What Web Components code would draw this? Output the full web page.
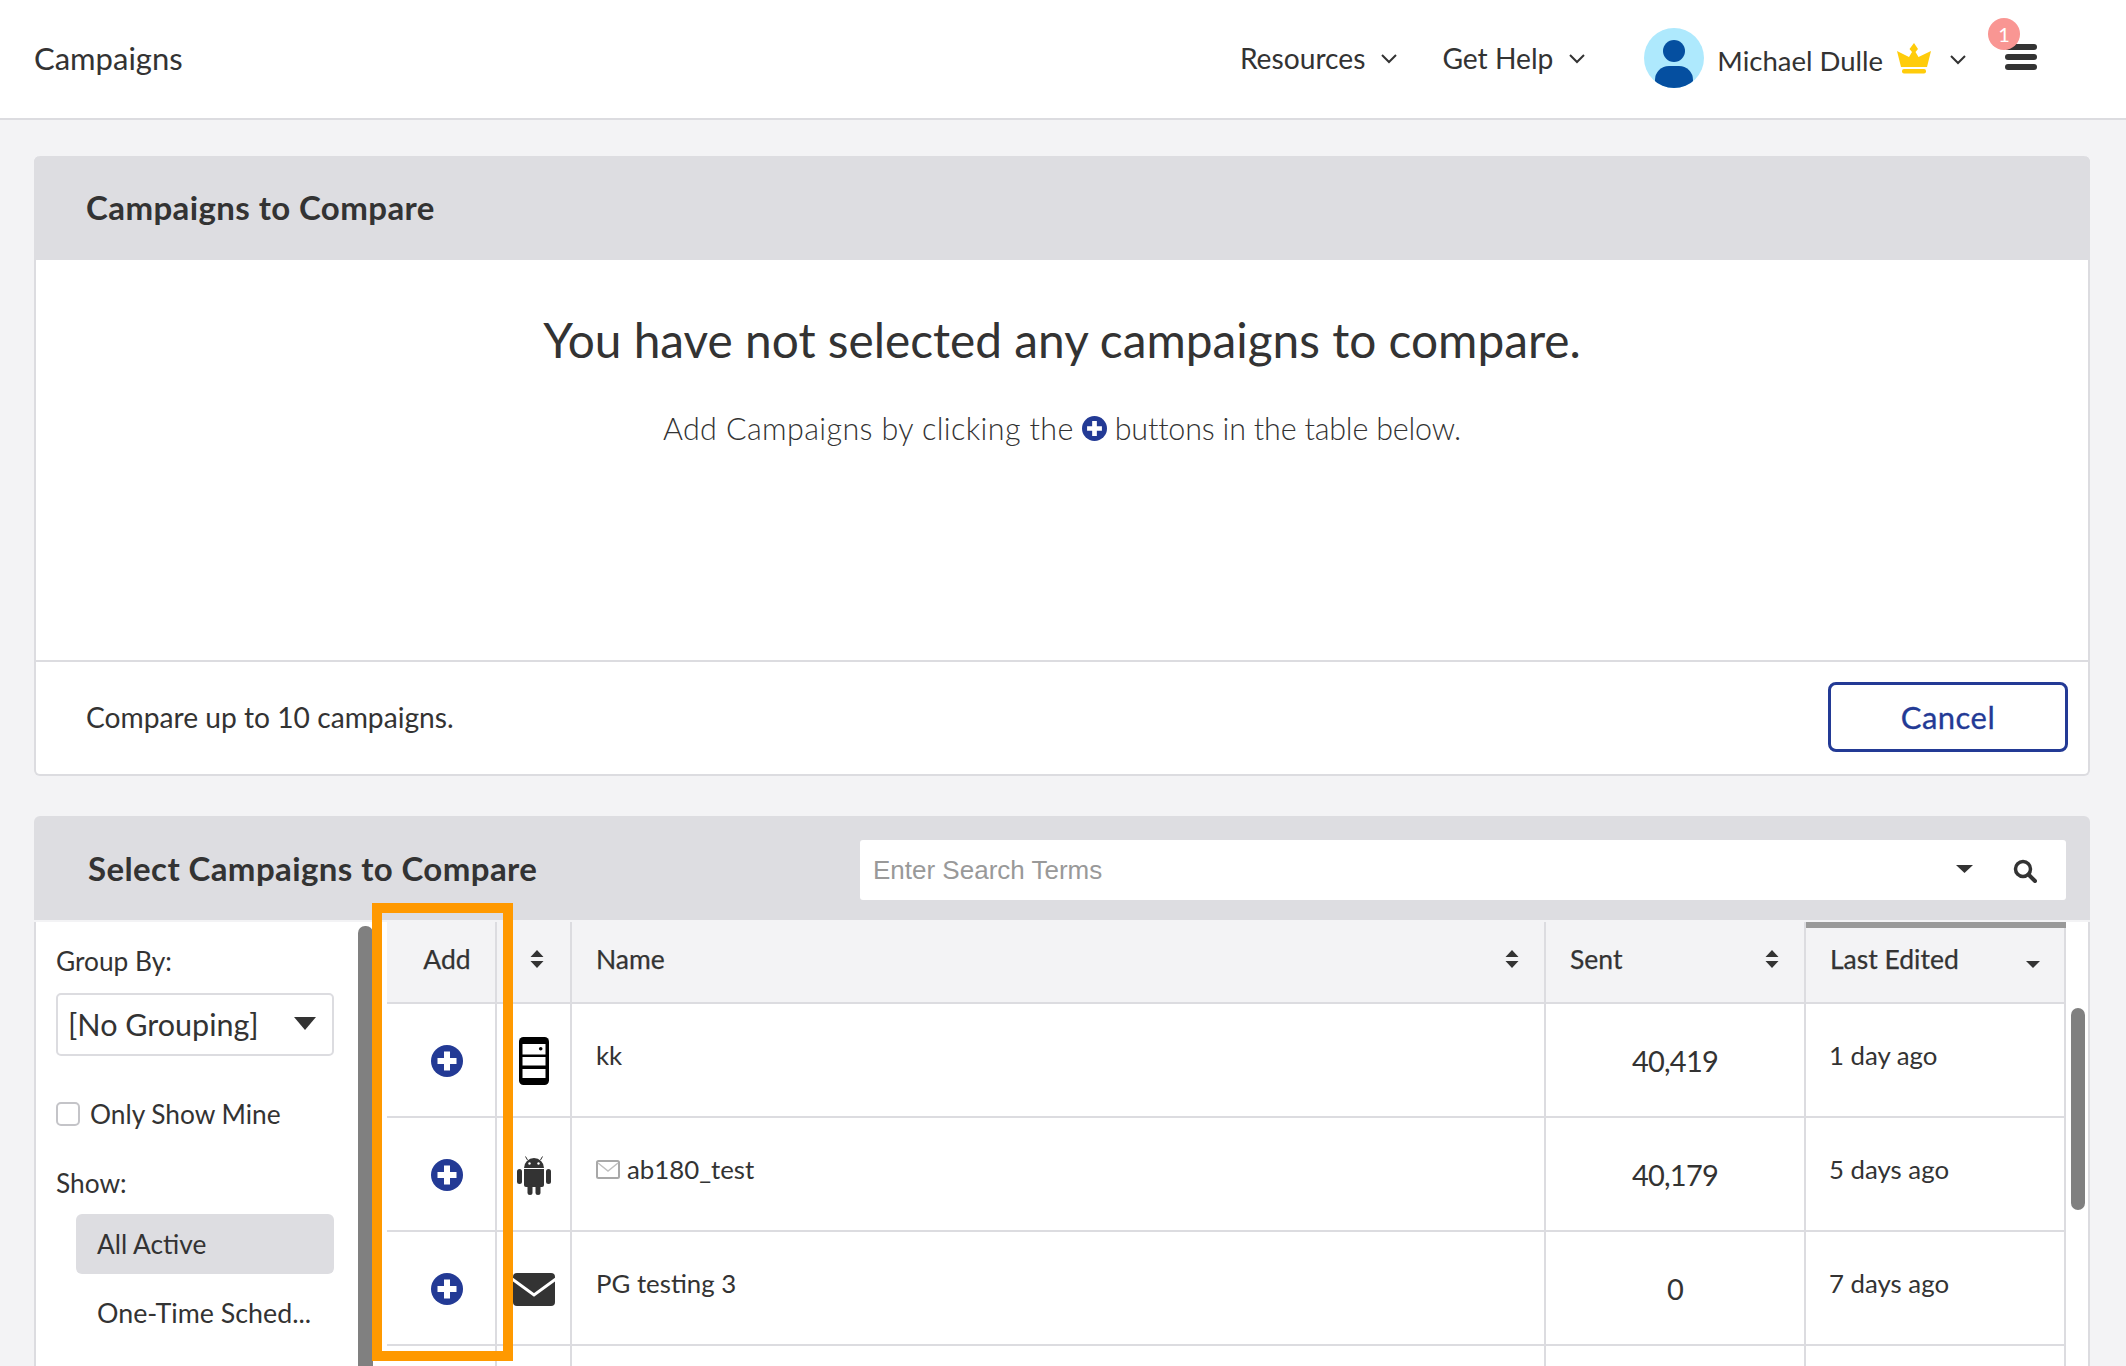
<!DOCTYPE html>
<html>
<head>
<meta charset="utf-8">
<title>Campaigns</title>
<style>
  html, body { margin: 0; height: 100%; overflow: hidden; }
  body { background: #f3f3f5; color: #333; font-family: Lato, "Liberation Sans", sans-serif; }
</style>
</head>
<body>
<top-bar></top-bar>
<main-area>
  <compare-panel></compare-panel>
  <select-panel></select-panel>
</main-area>

<script>
const BLUE = '#233a95';
const chevron = '<svg width="18" height="11" viewBox="0 0 18 11"><path d="M2 2l7 7 7-7" fill="none" stroke="#333" stroke-width="2"/></svg>';
const sortIcon = '<svg width="14" height="20" viewBox="0 0 14 20"><path d="M7 1l6.500 7H.5zM7 19l6.500-7H.5z" fill="#333"/></svg>';

customElements.define('plus-icon', class extends HTMLElement {
  constructor() {
    super();
    const size = this.getAttribute('size') || 32;
    this.attachShadow({ mode: 'open' }).innerHTML = `
      <style>:host { display: inline-flex; } svg { display: block; }</style>
      <svg width="${size}" height="${size}" viewBox="0 0 32 32">
        <circle cx="16" cy="16" r="16" fill="${BLUE}"/>
        <path d="M13 6.500h6V13h6.500v6H19v6.500h-6V19H6.500v-6H13z" fill="#fff"/>
      </svg>`;
  }
});

customElements.define('nav-menu', class extends HTMLElement {
  constructor() {
    super();
    this.attachShadow({ mode: 'open' }).innerHTML = `
      <style>
        :host { display: flex; align-items: center; gap: 15px; font-size: 28.200px; color: #333; }
      </style>
      <slot></slot>${chevron}`;
  }
});

customElements.define('top-bar', class extends HTMLElement {
  constructor() {
    super();
    this.attachShadow({ mode: 'open' }).innerHTML = `
      <style>
        :host { display: flex; align-items: center; height: 118px; padding: 0 34px; background: #fff; border-bottom: 2px solid #dcdce0; font-size: 28px; }
        .title { flex: 1; margin-top: -3px; font-size: 31px; }
        .right { display: flex; align-items: center; }
        nav-menu { margin-top: -2px; }
        nav-menu + nav-menu { margin-left: 44px; }
        .avatar { margin-left: 58px; display: block; margin-top: -2px; }
        .user { margin-left: 13px; margin-top: 2px; font-size: 27.500px; }
        .crown { margin-left: 14px; display: block; margin-top: -1px; }
        .caret { margin-left: 17px; display: block; }
        .burger { position: relative; margin: -4px 55px 0 38px; width: 32px; height: 26px; display: flex; flex-direction: column; justify-content: space-between; }
        .burger i { display: block; height: 6px; background: #333; border-radius: 3px; }
        .badge { position: absolute; left: -17px; top: -26px; width: 32px; height: 32px; border-radius: 50%; background: #f99693; color: #fff; font-size: 20px; line-height: 32px; text-align: center; }
      </style>
      <div class="title">Campaigns</div>
      <div class="right">
        <nav-menu>Resources</nav-menu>
        <nav-menu>Get Help</nav-menu>
        <svg class="avatar" width="60" height="60" viewBox="0 0 60 60">
          <defs><clipPath id="av"><circle cx="30" cy="30" r="30"/></clipPath></defs>
          <circle cx="30" cy="30" r="30" fill="#aee9fd"/>
          <g clip-path="url(#av)" fill="#054fa0">
            <circle cx="30" cy="23" r="11"/>
            <rect x="11" y="38" width="38" height="30" rx="14"/>
          </g>
        </svg>
        <span class="user">Michael Dulle</span>
        <svg class="crown" width="35" height="32" viewBox="0 0 35 32">
          <path d="M17 0l4 6-2.500 3 3 5L34 8l-4 16H4L0 8l12 6 3-5-2.500-3z" fill="#ffcc0a"/>
          <rect x="5" y="26" width="24" height="4.500" rx="2" fill="#ffcc0a"/>
        </svg>
        <svg class="caret" width="18" height="11" viewBox="0 0 18 11"><path d="M2 2l7 7 7-7" fill="none" stroke="#333" stroke-width="2"/></svg>
        <div class="burger"><i></i><i></i><i></i><span class="badge">1</span></div>
      </div>`;
  }
});

customElements.define('main-area', class extends HTMLElement {
  constructor() {
    super();
    this.attachShadow({ mode: 'open' }).innerHTML = `
      <style>
        :host { display: flex; flex-direction: column; gap: 40px; padding: 36px 36px 0 34px; }
      </style>
      <slot></slot>`;
  }
});

customElements.define('compare-panel', class extends HTMLElement {
  constructor() {
    super();
    this.attachShadow({ mode: 'open' }).innerHTML = `
      <style>
        :host { display: block; background: #fff; border: 2px solid #dcdce0; border-top: 0; border-radius: 6px; }
        .head { height: 104px; margin: 0 -2px; padding: 0 0 3px 52px; box-sizing: border-box; background: #dddde1; border-radius: 6px 6px 0 0; display: flex; align-items: center; font-size: 33px; font-weight: 700; letter-spacing: .4px; }
        .body { height: 400px; text-align: center; }
        h1 { margin: 0; padding-top: 50px; font-size: 47.800px; line-height: 60px; font-weight: 400; }
        p { margin: 38px 0 0; font-size: 30.500px; line-height: 40px; font-weight: 300; display: flex; justify-content: center; align-items: center; gap: 8px; }
        p .a { letter-spacing: .37px; }
        p .b { letter-spacing: -.2px; }
        .foot { box-sizing: border-box; height: 114px; border-top: 2px solid #dcdce0; padding: 0 20px 2px 50px; display: flex; align-items: center; justify-content: space-between; font-size: 28.200px; }
        .cancel { width: 234px; height: 64px; border: 3px solid ${BLUE}; border-radius: 8px; color: ${BLUE}; font-size: 31px; letter-spacing: .5px; -webkit-text-stroke: .3px ${BLUE}; display: flex; align-items: center; justify-content: center; }
      </style>
      <div class="head">Campaigns to Compare</div>
      <div class="body">
        <h1>You have not selected any campaigns to compare.</h1>
        <p><span class="a">Add Campaigns by clicking the</span><plus-icon size="25"></plus-icon><span class="b">buttons in the table below.</span></p>
      </div>
      <div class="foot">
        <span>Compare up to 10 campaigns.</span>
        <span class="cancel">Cancel</span>
      </div>`;
  }
});

customElements.define('side-filter', class extends HTMLElement {
  constructor() {
    super();
    this.attachShadow({ mode: 'open' }).innerHTML = `
      <style>
        :host { display: block; width: 322px; flex: none; padding: 21px 24px 0 20px; box-sizing: border-box; font-size: 26.300px; background: #fff; }
        .label { line-height: 36px; }
        .select { margin-top: 14px; height: 63px; box-sizing: border-box; border: 2px solid #dcdce0; border-radius: 5px; display: flex; align-items: center; justify-content: space-between; padding: 0 16px 2px 10px; font-size: 30.500px; }
        .select svg { display: block; }
        .check { margin-top: 46px; display: flex; align-items: center; gap: 10px; line-height: 24px; }
        .box { width: 24px; height: 24px; box-sizing: border-box; border: 2px solid #c4c4c8; border-radius: 5px; background: #fff; }
        .show { margin-top: 39px; }
        .opts { margin: 13px 0 0 20px; }
        .opt { height: 60px; border-radius: 6px; padding-left: 21px; display: flex; align-items: center; }
        .opt.on { background: #dddde1; }
        .opt + .opt { margin-top: 9px; font-size: 26.800px; }
      </style>
      <div class="label">Group By:</div>
      <div class="select">[No Grouping]<svg width="22" height="13" viewBox="0 0 22 13"><path d="M0 0h22L11 13z" fill="#333"/></svg></div>
      <div class="check"><span class="box"></span>Only Show Mine</div>
      <div class="label show">Show:</div>
      <div class="opts">
        <div class="opt on">All Active</div>
        <div class="opt">One-Time Sched...</div>
      </div>`;
  }
});

customElements.define('camp-row', class extends HTMLElement {
  constructor() {
    super();
    const icons = {
      server: `<svg width="30" height="48" viewBox="0 0 30 48">
        <rect x="0" y="0" width="30" height="48" rx="4.500" fill="#000"/>
        <rect x="3.500" y="7" width="23" height="10.500" fill="#fff"/>
        <rect x="3.500" y="20" width="23" height="8.500" fill="#fff"/>
        <rect x="3.500" y="32" width="23" height="9" fill="#fff"/>
        <circle cx="21.700" cy="11.700" r="1.800" fill="#000"/>
      </svg>`,
      android: `<svg width="34" height="39" viewBox="0 0 34 39" fill="#333">
        <path d="M7 12a10 10 0 0 1 20 0z"/>
        <path d="M10.500 4L8.500 0.500M23.500 4l2-3.500" stroke="#333" stroke-width="1"/>
        <circle cx="12.500" cy="7.500" r="1.200" fill="#fff"/><circle cx="21.500" cy="7.500" r="1.200" fill="#fff"/>
        <path d="M7 13h20V29a2 2 0 0 1-2 2H9a2 2 0 0 1-2-2z"/>
        <rect x="0" y="13" width="5" height="15" rx="2.500"/>
        <rect x="29" y="13" width="5" height="15" rx="2.500"/>
        <rect x="10.500" y="28" width="5" height="11" rx="2.500"/>
        <rect x="18.500" y="28" width="5" height="11" rx="2.500"/>
      </svg>`,
      mail: `<svg width="42" height="33" viewBox="0 0 42 33">
        <rect width="42" height="33" rx="4" fill="#333"/>
        <path d="M-1 6l22 16 22-16" fill="none" stroke="#fff" stroke-width="3"/>
      </svg>`
    };
    const small = this.hasAttribute('mail') ? `<svg class="mini" width="24" height="19" viewBox="0 0 24 19"><rect x="1" y="1" width="22" height="17" rx="1.500" fill="none" stroke="#a8a8a8" stroke-width="2"/><path d="M2 3l10 8 10-8" fill="none" stroke="#c0c0c0" stroke-width="1.500"/></svg>` : '';
    this.attachShadow({ mode: 'open' }).innerHTML = `
      <style>
        :host { display: grid; grid-template-columns: var(--cols); height: 114px; box-sizing: border-box; border-bottom: 2px solid #dcdce0; background: #fff; font-size: 25.800px; }
        div { border-right: 2px solid #dcdce0; box-sizing: border-box; }
        .add, .type { display: flex; align-items: center; justify-content: center; padding-top: 2px; }
        .add { padding-left: 12px; }
        .type { padding-left: 1px; }
        .name { padding: 33px 0 0 24px; display: flex; align-items: flex-start; gap: 7px; line-height: 36px; }
        .mini { margin-top: 9px; flex: none; }
        .sent { display: flex; align-items: center; justify-content: center; font-size: 29px; letter-spacing: -.8px; }
        .date { padding: 33px 0 0 23px; line-height: 36px; }
      </style>
      <div class="add"><plus-icon></plus-icon></div>
      <div class="type">${icons[this.getAttribute('icon')] || ''}</div>
      <div class="name">${small}<span><slot></slot></span></div>
      <div class="sent">${this.getAttribute('sent') || ''}</div>
      <div class="date">${this.getAttribute('date') || ''}</div>`;
  }
});

customElements.define('select-panel', class extends HTMLElement {
  constructor() {
    super();
    this.attachShadow({ mode: 'open' }).innerHTML = `
      <style>
        :host { display: block; position: relative; --cols: 110px 75px 974px 260px 260px; }
        .head { height: 104px; padding: 0 24px 0 54px; background: #dddde1; border-radius: 6px 6px 0 0; display: flex; align-items: center; justify-content: space-between; font-size: 33px; font-weight: 700; letter-spacing: .4px; }
        .search { width: 1206px; height: 60px; margin-top: 4px; box-sizing: border-box; background: #fff; border-radius: 3px; display: flex; align-items: center; padding: 1px 29px 0 13px; font: 400 26px "Liberation Sans", Arial, sans-serif; letter-spacing: 0; color: #999; }
        .search span { flex: 1; }
        .search svg { display: block; }
        .search .drop { margin: -4px 40px 0 0; }
        .body { display: flex; height: 445px; overflow: hidden; background: #fff; border-left: 2px solid #dcdce0; border-right: 2px solid #dcdce0; margin-top: 2px; box-sizing: border-box; }
        .vbar { width: 15px; flex: none; background: #fff; margin-right: 14px; }
        .vbar i { display: block; height: 100%; margin-top: 4px; background: #808080; border-radius: 7px 7px 0 0; }
        .table { width: 1679px; flex: none; }
        .th { display: grid; grid-template-columns: var(--cols); height: 82px; box-sizing: border-box; background: #f3f3f5; border-bottom: 2px solid #dcdce0; font-size: 26.500px; -webkit-text-stroke: .25px #333; }
        .th > div { border-right: 2px solid #dcdce0; padding: 0 25px 7px 24px; box-sizing: border-box; display: flex; align-items: center; justify-content: space-between; position: relative; }
        .th .ad { justify-content: center; padding: 0 0 7px 12px; }
        .th .so { justify-content: center; padding: 0 0 7px 6px; }
        .th .cur { padding-right: 22px; }
        .th .cur::before { content: ""; position: absolute; left: 0; right: -2px; top: 0; height: 6px; background: #999; }
        .th svg { display: block; }
        .th .dn { margin-top: 12px; margin-right: 2px; }
        .gutter { width: 22px; flex: none; position: relative; }
        .gutter i { position: absolute; left: 5px; top: 86px; width: 14px; height: 202px; background: #808080; border-radius: 7px; }
        .mark { position: absolute; left: 338px; top: 87px; width: 141px; height: 458px; box-sizing: border-box; border: 10px solid #ff9900; }
      </style>
      <div class="head">
        <span>Select Campaigns to Compare</span>
        <div class="search">
          <span>Enter Search Terms</span>
          <svg class="drop" width="17" height="8" viewBox="0 0 17 8"><path d="M0 0h17l-8.500 8z" fill="#333"/></svg>
          <svg width="24" height="24" viewBox="0 0 24 24"><circle cx="10" cy="10" r="7.500" fill="none" stroke="#333" stroke-width="3.500"/><path d="M15.500 15.500L22 22" stroke="#333" stroke-width="4" stroke-linecap="round"/></svg>
        </div>
      </div>
      <div class="body">
        <side-filter></side-filter>
        <div class="vbar"><i></i></div>
        <div class="table">
          <div class="th">
            <div class="ad">Add</div>
            <div class="so">${sortIcon}</div>
            <div>Name${sortIcon}</div>
            <div>Sent${sortIcon}</div>
            <div class="cur">Last Edited<svg class="dn" width="14" height="7" viewBox="0 0 14 7"><path d="M0 0h14L7 7z" fill="#333"/></svg></div>
          </div>
          <camp-row icon="server" sent="40,419" date="1 day ago">kk</camp-row>
          <camp-row icon="android" sent="40,179" date="5 days ago" mail>ab180_test</camp-row>
          <camp-row icon="mail" sent="0" date="7 days ago">PG testing 3</camp-row>
          <camp-row></camp-row>
        </div>
        <div class="gutter"><i></i></div>
      </div>
      <div class="mark"></div>`;
  }
});
</script>
</body>
</html>
